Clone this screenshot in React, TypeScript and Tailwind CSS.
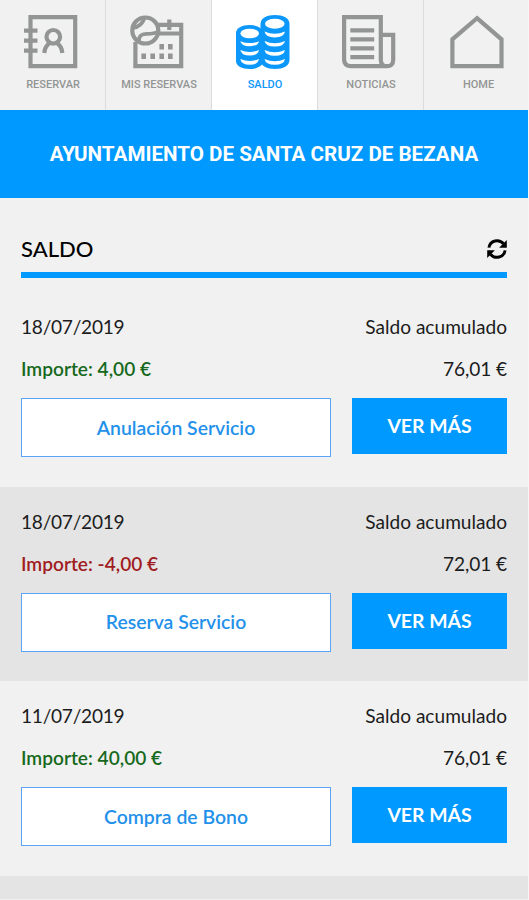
import type { ReactNode } from 'react';
import clsx from 'clsx';

function Icon({ children }: { children: ReactNode }) {
  return (
    <svg
      className="mr-[3px] h-[54px] w-[54px]"
      viewBox="0 0 54 54"
      fill="none"
      stroke="currentColor"
      strokeWidth="4.2"
    >
      {children}
    </svg>
  );
}

function ContactsIcon() {
  return (
    <Icon>
      <path d="M6.5 2.1H51.2V51.2H6.5Z" />
      <path d="M0 15.7H13.5M0 25.7H13.5M0 35.7H13.5" />
      <circle cx="29.3" cy="21.8" r="6.8" />
      <path d="M20.3 38C20.6 33 23 29.8 26.3 27.6M38.3 38C38 33 35.6 29.8 32.3 27.6" />
    </Icon>
  );
}

function CalendarIcon() {
  return (
    <Icon>
      <path d="M5.4 27V51.2H51.2V9.8H28M28 18.5H51.2M39.3 4.5V15" />
      <circle cx="15.3" cy="15.5" r="13" />
      <path
        strokeWidth="3.8"
        d="M3.5 12.5C9 12 12.5 8.5 14.5 3M9 26.5C8.5 20.5 12 18.8 17 18.8S25 18.4 28 16.5"
      />
      <path
        strokeWidth="5.6"
        d="M29.4 31.7h4.6M38 31.7h4.6M11.4 41.2h4.6M20.4 41.2h4.6M29.4 41.2h4.6M38 41.2h4.6"
      />
    </Icon>
  );
}

function CoinsIcon() {
  return (
    <Icon>
      <g fill="currentColor" stroke="none">
        <path d="M0 18C0 13 6 10 13.5 10S27 13 27 18V46C27 51 21 54 13.5 54S0 51 0 46Z" />
        <path d="M24.5 9C24.5 3 31 0 39 0S53.5 3 53.5 9V45C53.5 51 47 54 39 54S24.5 51 24.5 45Z" />
      </g>
      <g fill="#fff" stroke="none">
        <ellipse cx="13.7" cy="18.5" rx="9.3" ry="4.8" />
        <ellipse cx="38.8" cy="8.8" rx="9.8" ry="5" />
        <path d="M4.3 26.2Q13.7 30 23 26.2Q22 31.2 13.7 31.2T4.3 26.2Z" />
        <path d="M4.3 35Q13.7 39 23 35Q22 40.6 13.7 40.6T4.3 35Z" />
        <path d="M4.3 44Q13.7 48 23 44Q22 49.8 13.7 49.8T4.3 44Z" />
        <path d="M28.5 16.5Q38.8 21 49 16.5Q48 22.4 38.8 22.4T28.5 16.5Z" />
        <path d="M28.5 26Q38.8 30.5 49 26Q48 31.6 38.8 31.6T28.5 26Z" />
        <path d="M28.5 35Q38.8 39.5 49 35Q48 40.8 38.8 40.8T28.5 35Z" />
        <path d="M28.5 44Q38.8 48.5 49 44Q48 49.8 38.8 49.8T28.5 44Z" />
      </g>
    </Icon>
  );
}

function NewsIcon() {
  return (
    <Icon>
      <path d="M45 51.2H8.5Q2.1 50.5 2.1 44.5V2.1H38.8V45Q39 51.2 45 51.2T51.2 45V19.8H38.8" />
      <path d="M8.3 15.3H32.2M8.3 24.3H32.2M8.3 33.3H32.2M8.3 42.2H32.2" />
    </Icon>
  );
}

function HomeIcon() {
  return (
    <Icon>
      <path d="M27 3.2L51.5 24.3V51.2H2.4V24.3Z" />
    </Icon>
  );
}

function RefreshIcon() {
  return (
    <svg className="h-5 w-5" viewBox="0 0 20 20" fill="none" stroke="currentColor" strokeWidth="2.9">
      <path d="M1.9 8.6C3 1.4 12 -0.6 16.6 4.8M18.1 11.4C17 18.6 8 20.6 3.4 15.2" />
      <path
        fill="currentColor"
        stroke="none"
        d="M19.8 1V8.7H12.2L14.8 6.1L17.4 3.4ZM0.2 19V11.3H7.8L5.2 13.9L2.6 16.6Z"
      />
    </svg>
  );
}

const tabs = [
  { label: 'RESERVAR', icon: <ContactsIcon /> },
  { label: 'MIS RESERVAS', icon: <CalendarIcon /> },
  { label: 'SALDO', icon: <CoinsIcon />, active: true },
  { label: 'NOTICIAS', icon: <NewsIcon /> },
  { label: 'HOME', icon: <HomeIcon /> },
];

const movements = [
  { date: '18/07/2019', amount: '4,00 €', balance: '76,01 €', concept: 'Anulación Servicio' },
  { date: '18/07/2019', amount: '-4,00 €', balance: '72,01 €', concept: 'Reserva Servicio' },
  { date: '11/07/2019', amount: '40,00 €', balance: '76,01 €', concept: 'Compra de Bono' },
];

type Movement = (typeof movements)[number];

function MovementRow({ date, amount, balance, concept }: Movement) {
  return (
    <li className="h-[194.7px] px-[21px] pt-[14px] even:bg-[#e4e4e4]">
      <div className="flex h-[42px] items-center justify-between">
        <span className="tracking-[-0.25px]">{date}</span>
        <span>Saldo acumulado</span>
      </div>
      <div className="flex h-[42px] items-center justify-between">
        <span
          className={clsx(
            'font-semibold',
            amount.startsWith('-') ? 'text-[#a01c22]' : 'text-[#16691b]',
          )}
        >
          Importe: {amount}
        </span>
        <span className="tracking-[-0.1px]">{balance}</span>
      </div>
      <div className="mt-[8px] flex items-start justify-between text-[19.4px]">
        <button className="h-[59px] w-[310px] border border-[#5aa5f5] bg-white font-semibold text-[#2391ea]">
          {concept}
        </button>
        <button className="h-[56px] w-[155px] bg-[#0099ff] font-bold text-white">
          VER MÁS
        </button>
      </div>
    </li>
  );
}

export default function App() {
  return (
    <div className="flex h-[900px] w-[529px] flex-col overflow-hidden border-r border-[#f6f6f6] bg-[#f1f1f1] font-['Lato',sans-serif] text-[19.1px] leading-6 text-[#1c1c1c]">
      <nav className="grid h-[110px] shrink-0 grid-cols-[106px_106px_106px_106px_104px] font-['Roboto',sans-serif] text-[11px] font-medium">
        {tabs.map(({ label, icon, active }) => (
          <a
            key={label}
            className={clsx(
              'flex flex-col items-center border-r border-[#dcdcdc] pt-[15px] last:border-r-0 last:pl-[4px]',
              active ? 'bg-white text-[#0c98fb]' : 'text-[#939594]',
            )}
          >
            {icon}
            <span className="mt-[7px] ml-px leading-[17px]">{label}</span>
          </a>
        ))}
      </nav>
      <header className="flex h-[88px] shrink-0 items-center justify-center bg-[#0099ff] font-['Roboto',sans-serif] text-[20.6px] font-bold text-white">
        <h1>AYUNTAMIENTO DE SANTA CRUZ DE BEZANA</h1>
      </header>
      <div className="mx-[21px] flex h-[80px] shrink-0 items-center justify-between border-b-[6px] border-[#0099ff] pt-[28px] text-black">
        <h2 className="text-[22px] font-medium">SALDO</h2>
        <RefreshIcon />
      </div>
      <ul className="mt-[14px]">
        {movements.map((movement, i) => (
          <MovementRow key={i} {...movement} />
        ))}
      </ul>
      <div className="h-[23px] shrink-0 bg-[#e4e4e4]" />
    </div>
  );
}
